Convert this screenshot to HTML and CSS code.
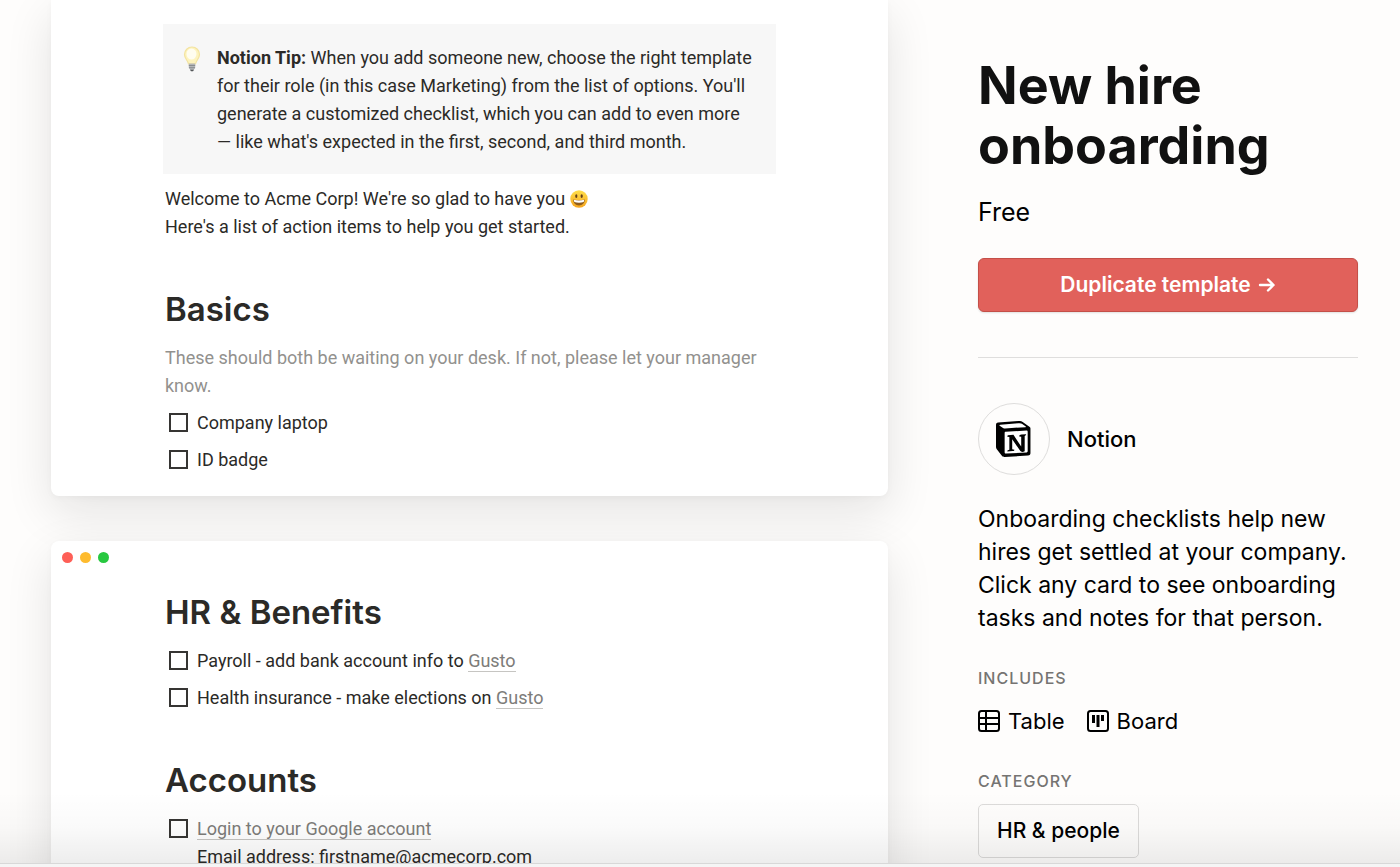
FILE: index.html
```html
<!DOCTYPE html>
<html lang="en">
<head>
<meta charset="utf-8">
<meta name="viewport" content="width=device-width, initial-scale=1">
<title>New hire onboarding</title>
<link rel="stylesheet" href="styles.css">
</head>
<body>
<div class="viewport">
  <div class="page">
    <main class="preview">
      <section class="window window-first">
        <div class="callout">
          <svg class="bulb" viewBox="0 0 18 26" aria-hidden="true">
            <path d="M9 1a7.5 7.5 0 0 0-7.5 7.6c0 4 3.3 5.600 4 9.400h7c.7-3.800 4-5.400 4-9.400A7.500 7.500 0 0 0 9 1z" fill="#fdf3bd" stroke="#f3e3a0" stroke-width="1.200"/>
            <ellipse cx="8.500" cy="8" rx="5" ry="5.500" fill="#fffdf0"/>
            <path d="M5.800 17.500h6.400v4.500l-2 2.500H7.800l-2-2.500z" fill="#b4b6b8"/>
            <path d="M5.800 19.500h6.400M6 21.700h6" stroke="#85888a" stroke-width=".9"/>
            <path d="M7 23.700h4l-1 1.500H8z" fill="#55585a"/>
          </svg>
          <p class="text"><strong>Notion Tip:</strong> When you add someone new, choose the right template<br>for their role (in this case Marketing) from the list of options. You'll<br>generate a customized checklist, which you can add to even more<br>— like what's expected in the first, second, and third month.</p>
        </div>
        <div class="doc">
          <p class="text welcome">Welcome to Acme Corp! We're so glad to have you
            <svg class="smiley" viewBox="0 0 18 18" role="img" aria-label="smiling face">
              <defs><linearGradient id="face" x1="0" y1="0" x2="0" y2="1"><stop offset="0" stop-color="#ffdf4a"/><stop offset="1" stop-color="#f5a51f"/></linearGradient></defs>
              <circle cx="9" cy="9" r="8.700" fill="url(#face)"/>
              <ellipse cx="6.300" cy="6.100" rx="1.100" ry="1.900" fill="#63401a"/>
              <ellipse cx="11.700" cy="6.100" rx="1.100" ry="1.900" fill="#63401a"/>
              <path d="M3.200 9.500c3.500 1 8.100 1 11.600 0 0 3.500-2.500 5.900-5.800 5.900s-5.800-2.400-5.800-5.900z" fill="#8f5c1c"/>
              <path d="M3.700 9.800c3.300.8 7.300.8 10.600 0l-.6 2.300c-3 .8-6.400.8-9.400 0z" fill="#fff"/>
            </svg><br>Here's a list of action items to help you get started.</p>
          <h2 class="heading">Basics</h2>
          <p class="text muted">These should both be waiting on your desk. If not, please let your manager<br>know.</p>
          <ul class="todos">
            <li><label class="todo"><input type="checkbox" class="box"><span>Company laptop</span></label></li>
            <li><label class="todo"><input type="checkbox" class="box"><span>ID badge</span></label></li>
          </ul>
        </div>
      </section>

      <section class="window window-second">
        <div class="lights" aria-hidden="true"><i class="light red"></i><i class="light amber"></i><i class="light green"></i></div>
        <div class="doc">
          <h2 class="heading">HR &amp; Benefits</h2>
          <ul class="todos">
            <li class="todo"><input type="checkbox" class="box" id="payroll"><span><label for="payroll">Payroll - add bank account info to</label> <a class="link" href="#gusto">Gusto</a></span></li>
            <li class="todo"><input type="checkbox" class="box" id="health"><span><label for="health">Health insurance - make elections on</label> <a class="link" href="#gusto">Gusto</a></span></li>
          </ul>
          <h2 class="heading">Accounts</h2>
          <ul class="todos">
            <li class="todo"><input type="checkbox" class="box" aria-label="Login to your Google account"><span><a class="link" href="#google">Login to your Google account</a><br>Email address: firstname@acmecorp.com</span></li>
          </ul>
        </div>
      </section>
    </main>

    <aside class="details">
      <h1 class="title">New hire<br>onboarding</h1>
      <p class="price">Free</p>
      <button class="duplicate" type="button">Duplicate template
        <svg class="arrow" viewBox="0 0 18 18" aria-hidden="true"><path d="M2 9h13.500M10 3.500L15.500 9 10 14.500" fill="none" stroke="currentColor" stroke-width="2.400" stroke-linecap="round" stroke-linejoin="round"/></svg>
      </button>
      <hr class="rule">
      <div class="author">
        <span class="avatar">
          <svg class="logo" viewBox="0 0 100 100" aria-hidden="true">
            <path d="M6 4.300l55.300-4.100c6.800-.6 8.500-.2 12.800 2.900l17.700 12.400c2.900 2.100 3.900 2.700 3.900 5.100v68.200c0 4.300-1.600 6.800-7 7.200L24.500 99.900c-4.100.2-6-.4-8.200-3.100L3.300 79.900C1 76.800 0 74.400 0 71.700V11.100c0-3.500 1.600-6.400 6-6.800z" fill="#000"/>
            <path d="M61.400 6.500L12.300 10.300c-3 .3-3.500 1.500-2.200 2.600L18.500 19c2 1.500 3 1.700 6.500 1.500l57-3.400c1.300-.1 1.500-1 .8-1.600L73 8.400c-2.400-1.900-5.800-2.400-11.600-1.900z" fill="#fff"/>
            <path d="M27 30l58-3.400c2-.1 3 .9 3 3V84c0 2-1 3.100-3 3.200L28 90.500c-3 .2-4-1-4-3.500V33.500c0-2.400 1-3.400 3-3.500z" fill="#fff"/>
            <path d="M33 39.500l15.500-1L70 71V43.500l-5.500-.7c.2-3.300 2.400-5 6-5.300l13-.8v2.200l-3.800 2.600v42.600c-2.400 1.200-4.600 1.900-6.500 1.900-3 0-4.200-.9-6-3.100L45 50.500v27.800l6.200 1.400s0 3.600-5 3.900l-14.500.8c-.4-.8 0-2.900 1.500-3.300l3.900-1V44.700L31.700 44c-.4-1.900.4-4.300 1.300-4.500z" fill="#000"/>
          </svg>
        </span>
        <span class="author-name">Notion</span>
      </div>
      <p class="description">Onboarding checklists help new<br>hires get settled at your company.<br>Click any card to see onboarding<br>tasks and notes for that person.</p>
      <h2 class="label">INCLUDES</h2>
      <ul class="includes">
        <li class="include">
          <svg class="icon" viewBox="0 0 22 22" aria-hidden="true"><g fill="none" stroke="currentColor" stroke-width="2"><rect x="1" y="1" width="20" height="20" rx="2.500"/><path d="M1 8h20M1 14h20M8 1v20"/></g></svg>
          Table
        </li>
        <li class="include">
          <svg class="icon" viewBox="0 0 22 22" aria-hidden="true"><rect x="1" y="1" width="20" height="20" rx="2.500" fill="none" stroke="currentColor" stroke-width="2"/><path d="M5 5h3v8H5zM9.500 5h3v12h-3zM14 5h3v6h-3z" fill="currentColor"/></svg>
          Board
        </li>
      </ul>
      <h2 class="label label-category">CATEGORY</h2>
      <a class="category" href="#hr-people">HR &amp; people</a>
    </aside>
  </div>
  <div class="fade"></div>
</div>
<div class="edge"></div>
</body>
</html>
```
FILE: styles.css
```css
* { box-sizing: border-box; }

body {
  margin: 0;
  height: 100vh;
  display: flex;
  flex-direction: column;
  overflow: hidden;
  background: #fefdfc;
  color: #000;
  font-family: Inter, "Liberation Sans", sans-serif;
}

h1, h2, p, ul { margin: 0; padding: 0; }
ul { list-style: none; }

.viewport { position: relative; flex: 1; min-height: 0; overflow: hidden; }

.page {
  display: grid;
  grid-template-columns: minmax(0, 1fr) 380px;
  gap: 90px;
  padding: 0 42px 0 51px;
}

.fade {
  position: absolute;
  inset: auto 0 0;
  height: 72px;
  pointer-events: none;
  background: linear-gradient(rgba(0, 0, 0, 0), rgba(0, 0, 0, .02) 50%, rgba(0, 0, 0, .07));
}

.edge { height: 4px; background: #f5f5f5; border-top: 1px solid #d8d8d8; }

.preview { display: flex; flex-direction: column; gap: 45px; color: #2b2a27; }

.window {
  padding: 0 112px 22px;
  border-radius: 8px;
  background: #fff;
  box-shadow: 0 16px 48px rgba(15, 15, 15, .11), 0 2px 6px rgba(15, 15, 15, .03);
}
.window-first { padding-top: 24px; border-radius: 0 0 8px 8px; }
.window-second { padding-top: 11px; }

.callout {
  display: flex;
  gap: 16px;
  padding: 20px 20px 18px;
  background: #f7f7f7;
}
.bulb { width: 18px; height: 26px; margin-top: 2px; flex: none; }

.doc { padding-left: 2px; }

.text, .todo {
  font-family: Roboto, "Liberation Sans", sans-serif;
  font-size: 18px;
  line-height: 28px;
  white-space: nowrap;
}
.welcome { margin-top: 11px; }
.smiley { width: 18px; height: 18px; vertical-align: -3px; }
.muted { color: #92918e; }

.heading {
  margin: 46px 0 13px;
  font-size: 33px;
  line-height: 44px;
  font-weight: 600;
}

.lights { display: flex; gap: 7px; margin: 0 -101px; }
.light { width: 11px; height: 11px; border-radius: 50%; }
.red { background: #fe5f57; }
.amber { background: #febb2e; }
.green { background: #28c840; }
.lights + .doc .heading:first-child { margin-top: 27px; }

.todos { display: grid; gap: 9px; margin-top: 9px; padding-left: 4px; }
.heading + .todos { margin-top: 0; }
.todo { display: flex; gap: 9px; }
.box {
  appearance: none;
  flex: none;
  width: 19px;
  height: 19px;
  margin: 4px 0 0;
  border: 2px solid #363533;
}
.link { color: #7d7c79; text-decoration: none; border-bottom: 1px solid #c6c5c2; }

.details { padding-top: 56px; }
.title { font-size: 52px; line-height: 60px; font-weight: 700; color: #111; }
.price { margin-top: 20px; font-size: 25px; line-height: 32px; }

.duplicate {
  display: flex;
  align-items: center;
  justify-content: center;
  gap: 7px;
  width: 100%;
  height: 54px;
  margin-top: 30px;
  border: 1px solid #c44f48;
  border-radius: 6px;
  background: #e1615b;
  color: #fff;
  font: 600 21px/28px Inter, "Liberation Sans", sans-serif;
  box-shadow: 0 1px 2px rgba(15, 15, 15, .12);
}
.arrow { width: 18px; height: 18px; }

.rule { margin: 45px 0; border: 0; border-top: 1px solid #dfdedd; }

.author { display: flex; align-items: center; gap: 17px; }
.avatar {
  display: grid;
  place-items: center;
  width: 72px;
  height: 72px;
  border: 1px solid #dedddc;
  border-radius: 50%;
}
.logo { width: 36px; height: 36px; }
.author-name { font-size: 22px; font-weight: 500; }

.description { margin-top: 28px; font-size: 23px; line-height: 33px; white-space: nowrap; }

.label {
  margin-top: 33px;
  font-size: 16px;
  line-height: 20px;
  font-weight: 500;
  letter-spacing: 1px;
  color: #757472;
}
.includes { display: flex; gap: 22px; margin-top: 18px; }
.include { display: flex; align-items: center; gap: 8px; font-size: 22px; line-height: 30px; }
.icon { width: 22px; height: 22px; }
.label-category { margin-top: 35px; }
.category {
  display: inline-block;
  margin-top: 13px;
  padding: 12px 18px;
  border: 1px solid #dcdbda;
  border-radius: 5px;
  color: #000;
  font-size: 21px;
  line-height: 28px;
  font-weight: 500;
  text-decoration: none;
}
```
